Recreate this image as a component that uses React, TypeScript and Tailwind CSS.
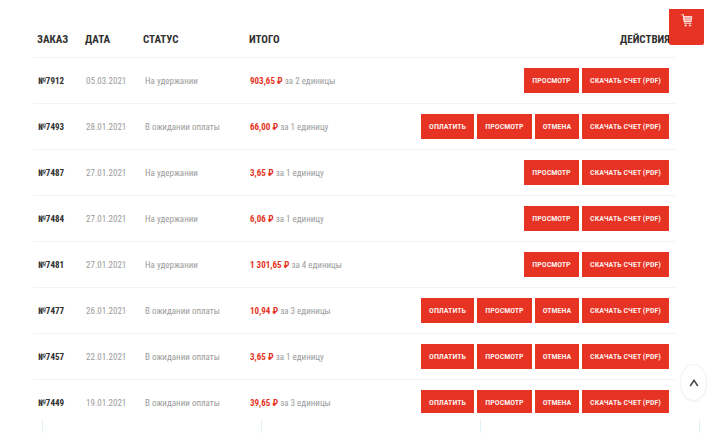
// ─── Data ─────────────────────────────────────────────────────────────────────

type Order = {
  id: string;
  date: string;
  status: string;
  total: string;
  items: string;
  payable?: boolean;
};

const HOLD = "На удержании";
const PENDING = "В ожидании оплаты";

const ORDERS: Order[] = [
  { id: "7912", date: "05.03.2021", status: HOLD,    total: "903,65",   items: "за 2 единицы" },
  { id: "7493", date: "28.01.2021", status: PENDING, total: "66,00",    items: "за 1 единицу", payable: true },
  { id: "7487", date: "27.01.2021", status: HOLD,    total: "3,65",     items: "за 1 единицу" },
  { id: "7484", date: "27.01.2021", status: HOLD,    total: "6,06",     items: "за 1 единицу" },
  { id: "7481", date: "27.01.2021", status: HOLD,    total: "1 301,65", items: "за 4 единицы" },
  { id: "7477", date: "26.01.2021", status: PENDING, total: "10,94",    items: "за 3 единицы", payable: true },
  { id: "7457", date: "22.01.2021", status: PENDING, total: "3,65",     items: "за 1 единицу", payable: true },
  { id: "7449", date: "19.01.2021", status: PENDING, total: "39,65",    items: "за 3 единицы", payable: true },
];

// ─── Pieces ───────────────────────────────────────────────────────────────────

function Action({ label, width }: { label: string; width: string }) {
  return (
    <button
      type="button"
      className={`${width} h-[25px] shrink-0 bg-[#e63323] pt-px text-[8px] font-semibold whitespace-nowrap text-[#fff0ee] hover:bg-[#c92a1c]`}
    >
      {label}
    </button>
  );
}

function CartIcon() {
  return (
    <svg viewBox="0 0 12 13" className="h-[13px] w-3" fill="none" stroke="#ffe4e0" strokeLinecap="round" strokeLinejoin="round">
      <path d="M.8.8h1.5l1.5 8.4h6.4" strokeWidth="1.1" />
      <path d="M2.7 2.6h8.1l-.6 4.9H3.6z" fill="#ffe4e0" fillOpacity=".5" strokeWidth="1" />
      <path d="M5.3 2.8v4.5M7.2 2.8v4.5M9 2.8v4.5M3.3 5h7" strokeWidth=".5" />
      <circle cx="4.6" cy="11.5" r=".8" fill="#ffe4e0" strokeWidth=".6" />
      <circle cx="9" cy="11.5" r=".8" fill="#ffe4e0" strokeWidth=".6" />
    </svg>
  );
}

function OrdersTable() {
  return (
    <table className="w-full table-fixed border-collapse text-left">
      <thead>
        <tr className="h-[37px] border-b border-[#f3f3f3] text-[11px] font-semibold text-[#303030]">
          <th className="w-12 pt-[3px] pl-1">ЗАКАЗ</th>
          <th className="w-[58px] pt-[3px] pl-1">ДАТА</th>
          <th className="w-[106px] pt-[3px] pl-1">СТАТУС</th>
          <th className="w-[120px] pt-[3px] pl-1">ИТОГО</th>
          <th className="pt-[3px] pr-[6px] text-right">ДЕЙСТВИЯ</th>
        </tr>
      </thead>
      <tbody>
        {ORDERS.map((order) => (
          <tr key={order.id} className="h-[46px] border-b border-[#f3f3f3] text-[9px] whitespace-nowrap text-[#9b9b9b]">
            <td className="pt-[3px] pl-[5px]">
              <a href={`#order-${order.id}`} className="font-bold text-[#303030]">№{order.id}</a>
            </td>
            <td className="pt-[3px] pl-[5px]">{order.date}</td>
            <td className="pt-[3px] pl-[6px]">{order.status}</td>
            <td className="pt-[3px] pl-[5px]">
              <span className="font-bold text-[#e63323]">{order.total} ₽</span> {order.items}
            </td>
            <td className="pr-[7px]">
              <div className="flex justify-end gap-[3px]">
                {order.payable && <Action label="ОПЛАТИТЬ" width="w-[53px]" />}
                <Action label="ПРОСМОТР" width="w-[55px]" />
                {order.payable && <Action label="ОТМЕНА" width="w-[44px]" />}
                <Action label="СКАЧАТЬ СЧЕТ (PDF)" width="w-[87px]" />
              </div>
            </td>
          </tr>
        ))}
      </tbody>
    </table>
  );
}

// ─── Page ─────────────────────────────────────────────────────────────────────

export default function App() {
  return (
    <div className="relative flex h-screen flex-col bg-white font-['Roboto_Condensed','Roboto',sans-serif]">
      <main className="min-h-0 flex-1 overflow-hidden pt-5 pr-12 pl-[33px]">
        <OrdersTable />
      </main>

      {/* Column guides under the table */}
      <div className="flex h-5 shrink-0 pt-[6px] pr-6 pl-[42px]">
        <div className="flex-1 border-l border-[#e3f0f7]" />
        <div className="flex-1 border-l border-[#e3f0f7]" />
        <div className="flex-1 border-x border-[#e3f0f7]" />
      </div>

      <button
        type="button"
        aria-label="Корзина"
        className="absolute top-[9px] right-5 flex h-9 w-[35px] justify-center rounded-b-xs bg-[#e63323] pt-[5px]"
      >
        <CartIcon />
      </button>
      <button
        type="button"
        aria-label="Наверх"
        className="absolute right-[17px] bottom-8 flex h-[37px] w-[27px] items-center justify-center rounded-[50%] border border-[#f3f3f3] bg-white text-[#444444] shadow-xs"
      >
        <svg viewBox="0 0 10 8" className="h-2 w-[10px]" fill="none" stroke="currentColor" strokeWidth="1.5">
          <path d="M1.2 7 5 1.4 8.8 7" />
        </svg>
      </button>
    </div>
  );
}
